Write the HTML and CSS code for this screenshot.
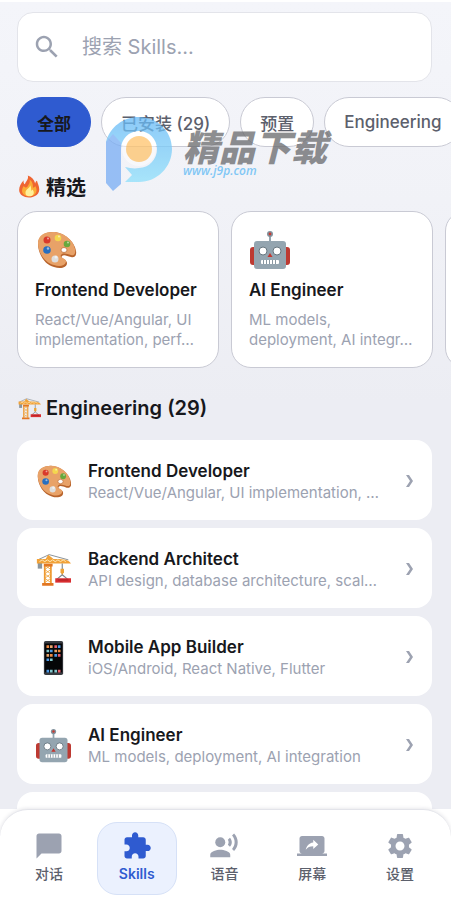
FILE: index.html
```html
<!DOCTYPE html>
<html lang="zh-CN">
<head>
  <meta charset="UTF-8">
  <title>Skills</title>
  <meta name="viewport" content="width=device-width, initial-scale=1.0">
  <link rel="stylesheet" href="styles.css">
</head>
<body>

  <!-- Emoji sprites -->
  <svg class="sprites" aria-hidden="true">
    <symbol id="palette" viewBox="0 0 40 40">
      <path d="M2 14C2 6 9 2 17 2c11 0 22 10 23 19 1 5-2 7-5 6-4-1-7-3-9-1-2 3 5 3 5 7 0 5-7 6-13 4C9 35 2 24 2 14z" fill="#b8642c"/>
      <path d="M2 13C2 5 9 2 17 2c11 0 21 9 22 17 1 5-1 7-4 6-4-1-8-3-10 0-2 3 6 3 5 7-1 4-7 5-12 3C9 33 2 23 2 13z" fill="#e8a268"/>
      <ellipse cx="28" cy="20" rx="3" ry="2.5" fill="#fff" stroke="#b8642c" stroke-width=".7"/>
      <circle cx="11" cy="10" r="3.5" fill="#d93a2b"/>
      <circle cx="22" cy="8" r="3.3" fill="#f4d64e"/>
      <circle cx="31" cy="14" r="3.3" fill="#67a83d"/>
      <circle cx="11" cy="20" r="3.8" fill="#286fc0"/>
      <circle cx="19" cy="29" r="3.5" fill="#dedede"/>
      <g fill="#fff" opacity=".55"><circle cx="12" cy="8.5" r="1"/><circle cx="23" cy="6.5" r="1"/><circle cx="32" cy="12.5" r="1"/><circle cx="12" cy="18.5" r="1.2"/><circle cx="20" cy="27" r="1.5"/></g>
    </symbol>
    <symbol id="robot" viewBox="0 0 40 40">
      <path d="M20 5v7" stroke="#92a3ae" stroke-width="2"/>
      <circle cx="20" cy="4" r="3" fill="#82929d"/><circle cx="20" cy="4" r="1.4" fill="#c83b31"/>
      <rect x="0" y="17" width="7" height="18" rx="3" fill="#bd3a32"/>
      <rect x="33" y="17" width="7" height="18" rx="3" fill="#bd3a32"/>
      <rect x="4" y="11" width="32" height="28" rx="3" fill="#94a5b0"/>
      <circle cx="13" cy="21" r="4" fill="#fff" stroke="#687780"/>
      <circle cx="27" cy="21" r="4" fill="#fff" stroke="#687780"/>
      <path d="M20 23l2.5 4h-5z" fill="#c3362e"/>
      <rect x="11" y="30" width="18" height="4" rx="1" fill="#fff"/>
      <path d="M13.5 30v4m3-4v4m3-4v4m3-4v4m3-4v4" stroke="#8998a2"/>
    </symbol>
    <symbol id="crane" viewBox="0 0 40 40">
      <path d="M2 9L15 3l22 6" fill="none" stroke="#7c858b"/>
      <rect x="2" y="12" width="5" height="7" fill="#8c969c"/>
      <path d="M1 8h10l3-5 6 5c8 0 17 0 20 5H1z" fill="#f1a238"/>
      <path d="M4 11l3-2 3 2 3-2 3 2 3-2 3 2 3-2 3 2 3-2 3 2" fill="none" stroke="#fff0c7"/>
      <path d="M10 14v22m7-22v22" stroke="#ee9830" stroke-width="2"/>
      <path d="M10 15l7 5-7 5 7 5-7 5m7-20l-7 5 7 5-7 5 7 5" fill="none" stroke="#efa743"/>
      <path d="M9 15h10M7 37h13" stroke="#e27622" stroke-width="3"/>
      <path d="M30 13v13m0 0l-6 5m6-5l6 5" fill="none" stroke="#7e878d" stroke-width="1.3"/>
      <path d="M28 19h4v4l-2 3-2-3z" fill="#efa335"/>
      <path d="M22 30h18v5H22z" fill="#d92e30"/><path d="M25 32h12" stroke="#a31e25"/>
    </symbol>
    <symbol id="phone" viewBox="0 0 40 40">
      <rect x="9" y="1" width="22" height="39" rx="2" fill="#383b40"/>
      <rect x="10" y="4" width="20" height="33" fill="#050608"/>
      <path d="M12 6h3v3h-3zm13 5h3v3h-3zm-9 5h3v3h-3z" fill="#ef8b43"/>
      <path d="M16 6h3v3h-3zm-4 10h3v3h-3zm9-5h3v3h-3z" fill="#e9a46b"/>
      <path d="M21 6h3v3h-3zm4 10h3v3h-3zm0 18h3v3h-3z" fill="#e95b68"/>
      <path d="M25 6h3v3h-3zm-9 5h3v3h-3zm5 5h3v3h-3zm-9 5h3v3h-3zm0 13h3v3h-3z" fill="#4c9ae8"/>
      <path d="M12 11h3v3h-3zm4 10h3v3h-3zm0 13h3v3h-3zm5 0h3v3h-3z" fill="#81c6cb"/>
    </symbol>
    <symbol id="fire" viewBox="0 0 40 40">
      <path d="M17 1c2 6-3 10-5 15-2-1-3-4-2-7C5 14 2 20 2 26c0 8 8 13 17 13s18-5 18-14c0-6-3-10-4-15-2 1-3 3-3 5C28 8 24 3 17 1z" fill="#ef6532"/>
      <path d="M20 8c2 6-2 9-4 13-2 2-5 0-6-2-7 10-1 18 9 18 13 0 16-11 11-18-1 2-2 3-4 3 0-6-1-11-6-14z" fill="#fbab35"/>
      <path d="M21 18c0 5-8 7-8 13 0 5 3 6 7 6 7 0 10-7 5-12l-2 3c0-4 0-7-2-10z" fill="#fff09a"/>
    </symbol>
    <symbol id="chevron" viewBox="0 0 8 14">
      <path d="M0 1h3l4 6-4 6H0l4-6z" fill="#9da2b1"/>
    </symbol>
  </svg>

  <div class="app">
    <main class="content">
      <label class="search">
        <svg class="icon" viewBox="0 0 24 24" aria-hidden="true"><path d="M15.5 14h-.79l-.28-.27C15.41 12.59 16 11.11 16 9.5 16 5.91 13.09 3 9.5 3S3 5.91 3 9.5 5.91 16 9.5 16c1.61 0 3.09-.59 4.23-1.57l.27.28v.79l5 4.99L20.49 19l-4.99-5zm-6 0C7.01 14 5 11.99 5 9.5S7.01 5 9.5 5 14 7.01 14 9.5 11.99 14 9.5 14z"/></svg>
        <input type="text" placeholder="搜索 Skills..." aria-label="搜索 Skills">
      </label>

      <div class="chips">
        <button class="chip active">全部</button>
        <button class="chip">已安装 (29)</button>
        <button class="chip">预置</button>
        <button class="chip">Engineering</button>
      </div>

      <h2 class="section-title"><svg aria-hidden="true"><use href="#fire"/></svg>精选</h2>
      <div class="featured">
        <a class="card" href="#">
          <svg class="card-icon" aria-hidden="true"><use href="#palette"/></svg>
          <h3>Frontend Developer</h3>
          <p>React/Vue/Angular, UI implementation, perf…</p>
        </a>
        <a class="card" href="#">
          <svg class="card-icon" aria-hidden="true"><use href="#robot"/></svg>
          <h3>AI Engineer</h3>
          <p>ML models, deployment, AI integr…</p>
        </a>
        <a class="card" href="#" aria-label="Skill"></a>
      </div>

      <h2 class="section-title engineering"><svg aria-hidden="true"><use href="#crane"/></svg>Engineering (29)</h2>
      <div class="list">
        <a class="row" href="#">
          <svg class="row-icon" aria-hidden="true"><use href="#palette"/></svg>
          <div class="row-text">
            <h3>Frontend Developer</h3>
            <p>React/Vue/Angular, UI implementation, …</p>
          </div>
          <svg class="chevron" aria-hidden="true"><use href="#chevron"/></svg>
        </a>
        <a class="row" href="#">
          <svg class="row-icon" aria-hidden="true"><use href="#crane"/></svg>
          <div class="row-text">
            <h3>Backend Architect</h3>
            <p>API design, database architecture, scal…</p>
          </div>
          <svg class="chevron" aria-hidden="true"><use href="#chevron"/></svg>
        </a>
        <a class="row" href="#">
          <svg class="row-icon" aria-hidden="true"><use href="#phone"/></svg>
          <div class="row-text">
            <h3>Mobile App Builder</h3>
            <p>iOS/Android, React Native, Flutter</p>
          </div>
          <svg class="chevron" aria-hidden="true"><use href="#chevron"/></svg>
        </a>
        <a class="row" href="#">
          <svg class="row-icon" aria-hidden="true"><use href="#robot"/></svg>
          <div class="row-text">
            <h3>AI Engineer</h3>
            <p>ML models, deployment, AI integration</p>
          </div>
          <svg class="chevron" aria-hidden="true"><use href="#chevron"/></svg>
        </a>
        <a class="row" href="#" aria-label="Skill"></a>
      </div>
    </main>

    <!-- Bottom navigation -->
    <div class="nav-wrap">
      <nav class="nav">
        <button class="tab">
          <svg class="icon" viewBox="0 0 24 24" aria-hidden="true"><path d="M20 2H4c-1.1 0-2 .9-2 2v18l4-4h14c1.1 0 2-.9 2-2V4c0-1.1-.9-2-2-2z"/></svg>
          <span>对话</span>
        </button>
        <button class="tab active">
          <svg class="icon" viewBox="0 0 24 24" aria-hidden="true"><path d="M20.5 11H19V7c0-1.1-.9-2-2-2h-4V3.5C13 2.12 11.88 1 10.5 1S8 2.12 8 3.5V5H4c-1.1 0-1.99.9-1.99 2v3.8H3.5c1.49 0 2.7 1.21 2.7 2.7s-1.21 2.7-2.7 2.7H2V20c0 1.1.9 2 2 2h3.8v-1.5c0-1.49 1.21-2.7 2.7-2.7 1.49 0 2.7 1.21 2.7 2.7V22H17c1.1 0 2-.9 2-2v-4h1.5c1.38 0 2.5-1.12 2.5-2.5S21.88 11 20.5 11z"/></svg>
          <span>Skills</span>
        </button>
        <button class="tab">
          <svg class="icon" viewBox="0 0 24 24" aria-hidden="true"><circle cx="9" cy="9" r="4"/><path d="M9 15c-2.67 0-8 1.34-8 4v2h16v-2c0-2.66-5.33-4-8-4zm7.76-9.64l-1.68 1.69c.84 1.18.84 2.71 0 3.89l1.68 1.69c2.02-2.02 2.02-5.07 0-7.27zM20.07 2l-1.63 1.63c2.77 3.02 2.77 7.56 0 10.74L20.07 16c3.9-3.89 3.91-9.95 0-14z"/></svg>
          <span>语音</span>
        </button>
        <button class="tab">
          <svg class="icon" viewBox="0 0 24 24" aria-hidden="true"><path d="M20 18c1.1 0 1.99-.9 1.99-2L22 6c0-1.11-.9-2-2-2H4c-1.11 0-2 .89-2 2v10c0 1.1.89 2 2 2H0v2h24v-2h-4zm-7-3.53v-2.19c-2.78 0-4.61.85-6 2.72.56-2.67 2.11-5.33 6-5.87V7l4 3.73-4 3.74z"/></svg>
          <span>屏幕</span>
        </button>
        <button class="tab">
          <svg class="icon" viewBox="0 0 24 24" aria-hidden="true"><path d="M19.14 12.94c.04-.3.06-.61.06-.94 0-.32-.02-.64-.07-.94l2.03-1.58c.18-.14.23-.41.12-.61l-1.92-3.32c-.12-.22-.37-.29-.59-.22l-2.39.96c-.5-.38-1.03-.7-1.62-.94l-.36-2.54c-.04-.24-.24-.41-.48-.41h-3.84c-.24 0-.43.17-.47.41l-.36 2.54c-.59.24-1.13.57-1.62.94l-2.39-.96c-.22-.08-.47 0-.59.22L2.74 8.87c-.12.21-.08.47.12.61l2.03 1.58c-.05.3-.09.63-.09.94s.02.64.07.94l-2.03 1.58c-.18.14-.23.41-.12.61l1.92 3.32c.12.22.37.29.59.22l2.39-.96c.5.38 1.03.7 1.62.94l.36 2.54c.05.24.24.41.48.41h3.84c.24 0 .44-.17.47-.41l.36-2.54c.59-.24 1.13-.56 1.62-.94l2.39.96c.22.08.47 0 .59-.22l1.92-3.32c.12-.22.07-.47-.12-.61l-2.01-1.58zM12 15.6c-1.98 0-3.6-1.62-3.6-3.6s1.62-3.6 3.6-3.6 3.6 1.62 3.6 3.6-1.62 3.6-3.6 3.6z"/></svg>
          <span>设置</span>
        </button>
      </nav>
    </div>
  </div>

  <div class="watermark">
    <svg viewBox="0 0 68 76" aria-hidden="true">
      <defs>
        <linearGradient id="ring" x1="0" y1="0" x2="0" y2="1"><stop offset="0" stop-color="#66b8f6"/><stop offset="1" stop-color="#8fe0fb"/></linearGradient>
      </defs>
      <path d="M1 27c4-15 17-25 33-25 18 0 33 14 33 32S52 67 34 67H20l7-7-7-8c5 1 9 2 14 1 10 0 18-9 18-19s-8-18-18-18-18 8-18 18v14L1 27z" fill="url(#ring)"/>
      <path d="M1 27l7-8 8 9v41l-8 7-7-8z" fill="#78adf4"/>
      <circle cx="34" cy="34" r="17" fill="#fff" opacity=".6"/>
      <circle cx="34" cy="34" r="13" fill="#ffc46b"/>
    </svg>
    <div class="watermark-text">
      <strong>精品下载</strong>
      <span>www.j9p.com</span>
    </div>
  </div>

</body>
</html>
```

FILE: styles.css
```css
* {
  box-sizing: border-box;
}

body {
  margin: 0;
  font-family: Inter, "Noto Sans CJK SC", sans-serif;
  color: #17181c;
  background-color: #fff;
}

button {
  font-family: inherit;
  cursor: pointer;
}

a {
  color: inherit;
  text-decoration: none;
}

h2, h3, p {
  margin: 0;
}

.sprites {
  display: none;
}

.icon {
  width: 30px;
  height: 30px;
  flex-shrink: 0;
  fill: #9ca2b1;
}

.app {
  height: 100vh;
  display: flex;
  flex-direction: column;
  border-top: 2px solid #fff;
}

.content {
  flex: 1;
  min-height: 0;
  overflow: hidden;
  padding: 10px 19px 0 17px;
  background: linear-gradient(#f4f5fa, #f1f2f7 200px, #ecedf3 400px);
}

/* Search */
.search {
  display: flex;
  align-items: center;
  gap: 20px;
  height: 70px;
  padding: 0 14px;
  background-color: #fff;
  border: 1px solid #e3e4ea;
  border-radius: 16px;
}

.search input {
  flex: 1;
  min-width: 0;
  padding: 0;
  border: none;
  outline: none;
  background: transparent;
  font-family: inherit;
  font-size: 20px;
}

.search input::placeholder {
  color: #9ca2b1;
}

/* Filter chips */
.chips {
  display: flex;
  gap: 10px;
  margin: 15px -19px 0 0;
  overflow: hidden;
}

.chip {
  flex-shrink: 0;
  height: 50px;
  padding: 0 19px;
  background-color: #fff;
  border: 1px solid #c9cad4;
  border-radius: 25px;
  color: #5c606c;
  font-size: 17px;
  font-weight: 500;
}

.chip.active {
  background-color: #2f5bd0;
  border-color: #2f5bd0;
  color: #17181c;
  font-weight: 700;
}

.section-title {
  display: flex;
  align-items: center;
  gap: 4px;
  height: 28px;
  margin: 25px 0 11px;
  font-size: 20px;
  font-weight: 600;
}

.section-title svg {
  width: 25px;
  height: 23px;
}

.section-title.engineering {
  margin: 26px 0 18px;
}

/* Featured cards */
.featured {
  display: flex;
  gap: 12px;
  margin-right: -19px;
  overflow: hidden;
}

.card {
  flex: 0 0 202px;
  min-width: 0;
  height: 157px;
  padding: 18px 17px;
  background-color: #fff;
  border: 1px solid #c9cad4;
  border-radius: 20px;
}

.card-icon {
  display: block;
  width: 42px;
  height: 40px;
}

.card h3,
.row h3 {
  font-size: 17px;
  font-weight: 600;
  line-height: 24px;
  white-space: nowrap;
}

.card h3 {
  margin: 8px 0;
}

.card p,
.row p {
  color: #9ca2b1;
  font-size: 15px;
  line-height: 20px;
}

/* Skill list */
.list {
  display: flex;
  flex-direction: column;
  gap: 8px;
}

.row {
  display: flex;
  align-items: center;
  height: 80px;
  padding: 2px 18px 0 19px;
  background-color: #fff;
  border-radius: 16px;
}

.row-icon {
  flex-shrink: 0;
  width: 35px;
  height: 35px;
  margin-right: 17px;
}

.row-text {
  flex: 1;
  min-width: 0;
}

.row p {
  overflow: hidden;
  text-overflow: ellipsis;
  white-space: nowrap;
}

.chevron {
  flex-shrink: 0;
  width: 8px;
  height: 14px;
  margin-left: 12px;
}

/* Bottom navigation */
.nav-wrap {
  background-color: #fff;
}

.nav {
  display: flex;
  gap: 8px;
  padding: 12px 11px 9px 9px;
  background-color: #fff;
  border-top: 1px solid #e3e4ea;
  border-radius: 28px 28px 0 0;
  box-shadow: 0 0 4px #1c1c3c26;
}

.tab {
  flex: 1;
  display: flex;
  flex-direction: column;
  align-items: center;
  gap: 1px;
  padding: 8px 0 9px;
  background-color: transparent;
  border: 1px solid transparent;
  border-radius: 20px;
  color: #5c606c;
  font-size: 14px;
  font-weight: 500;
  line-height: 23px;
}

.tab.active {
  background-color: #ebf1fe;
  border-color: #d6e1f7;
  color: #2f5bd0;
  font-weight: 600;
}

.tab.active .icon {
  fill: #2f5bd0;
}

/* Watermark over the page */
.watermark {
  position: absolute;
  top: 115px;
  left: 105px;
  display: flex;
  gap: 10px;
  pointer-events: none;
  opacity: .75;
}

.watermark svg {
  width: 68px;
  height: 76px;
}

.watermark-text {
  display: flex;
  flex-direction: column;
  padding-top: 10px;
  font-style: italic;
}

.watermark-text strong {
  color: #68696c;
  font-family: "Noto Sans CJK SC", sans-serif;
  font-size: 36px;
  font-weight: 900;
  line-height: 40px;
}

.watermark-text span {
  color: #5bb9f5;
  font-family: "Open Sans", sans-serif;
  font-size: 12px;
  font-weight: 600;
  line-height: 12px;
}
```
